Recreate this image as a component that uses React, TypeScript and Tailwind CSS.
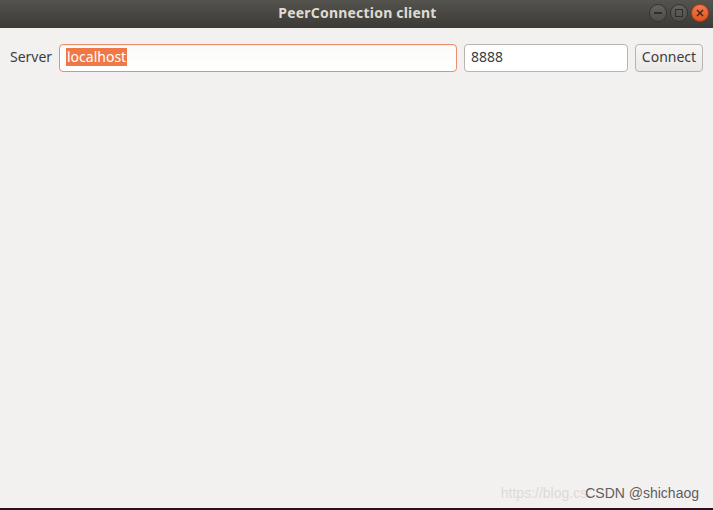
import React from "react";

const font = { fontFamily: '"Noto Sans", "Open Sans", sans-serif' };

export default function App() {
  return (
    <div
      className="w-[713px] h-[510px] flex flex-col bg-[#f2f1f0] overflow-hidden"
      style={font}
    >
      {/* title bar */}
      <div className="h-[28px] shrink-0 flex items-center relative bg-gradient-to-b from-[#55534e] to-[#3b3a36]">
        <div className="flex-1 text-center text-[14px] leading-[18px] font-bold text-[#dfdbd2] tracking-[0.2px] pl-[2px] -mt-[3px]">
          PeerConnection client
        </div>
        <div className="absolute right-[4px] top-[4px] flex gap-[3px]">
          <div className="w-[18px] h-[18px] rounded-full bg-gradient-to-b from-[#64635e] to-[#4e4d49] border border-[#35342f] flex items-center justify-center">
            <div className="w-[8px] h-[2px] bg-[#2f2e2b]" />
          </div>
          <div className="w-[18px] h-[18px] rounded-full bg-gradient-to-b from-[#64635e] to-[#4e4d49] border border-[#35342f] flex items-center justify-center">
            <div className="w-[8px] h-[8px] border-[1.5px] border-[#2f2e2b]" />
          </div>
          <div className="w-[18px] h-[18px] rounded-full bg-gradient-to-b from-[#f37a4e] to-[#e0531f] border border-[#a83c16] flex items-center justify-center">
            <svg width="8" height="8" viewBox="0 0 8 8">
              <path d="M1 1L7 7M7 1L1 7" stroke="#4a2312" strokeWidth="1.5" />
            </svg>
          </div>
        </div>
      </div>

      {/* content */}
      <div className="flex-1 flex flex-col">
        <div className="flex items-center pt-[16px] pl-[10px] pr-[10px] gap-[7px]">
          <span className="text-[14px] leading-[18px] -mt-[2px] text-[#3c3c3c] w-[42px]">Server</span>
          <div className="w-[398px] h-[28px] rounded-[4px] border border-[#e8906b] bg-gradient-to-b from-[#fbfbfa] to-[#ffffff] flex items-center px-[6px] shadow-[inset_0_1px_1px_rgba(0,0,0,0.06)]">
            <span className="bg-[#f07746] text-white text-[14px] leading-[18px] px-[1px] -mt-[2px]">
              localhost
            </span>
          </div>
          <div className="w-[164px] h-[28px] rounded-[4px] border border-[#b8b5b0] bg-white flex items-center px-[6px]">
            <span className="text-[14px] leading-[18px] -mt-[2px] text-[#3c3c3c]">8888</span>
          </div>
          <button className="w-[68px] h-[28px] rounded-[4px] border border-[#b8b5b0] bg-gradient-to-b from-[#f7f6f5] to-[#ebe9e7] text-[14px] leading-[18px] text-[#3c3c3c] flex items-center justify-center pb-[2px]">
            Connect
          </button>
        </div>
        <div className="flex-1 relative">
          <div
            className="absolute right-[14px] bottom-[4px] text-[14px] flex items-baseline"
            style={{ fontFamily: '"Liberation Sans", Arial, sans-serif' }}
          >
            <span className="text-[#dcdad8]">https://blog.cs</span>
            <span className="text-[#5e5e5e] -ml-[2px]">CSDN @shichaog</span>
          </div>
        </div>
      </div>
      <div className="h-[2px] shrink-0 bg-[#2c0d22]" />
    </div>
  );
}
